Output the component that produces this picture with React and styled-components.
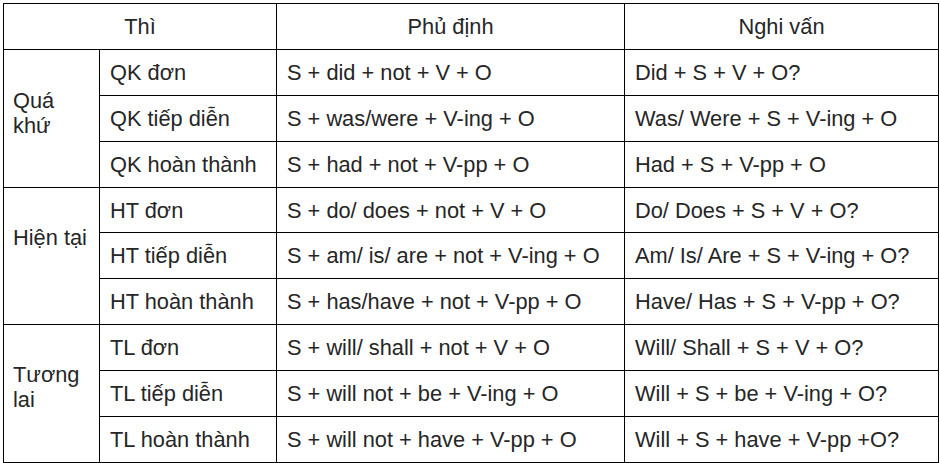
import React from 'react';
import styled, { createGlobalStyle } from 'styled-components';

const GlobalStyle = createGlobalStyle`
  html, body {
    margin: 0;
    padding: 0;
    background: #ffffff;
  }
  body {
    font-family: "Liberation Sans", Arial, sans-serif;
    color: #262626;
  }
`;

const Page = styled.div`
  padding: 3px;
`;

const Table = styled.table`
  border-collapse: collapse;
  table-layout: fixed;
  width: 935px;
  font-size: 21.8px;
  line-height: 25px;
`;

const Row = styled.tr`
  height: 45.9px;
`;

const HeadCell = styled.th`
  border: 1px solid #000000;
  font-weight: 400;
  text-align: center;
  vertical-align: middle;
  padding: 0 10px;
`;

const Cell = styled.td`
  border: 1px solid #000000;
  text-align: left;
  vertical-align: middle;
  padding: 0 10px;
  white-space: nowrap;
`;

// the period label spans its three rows and sits a little above centre
const GroupCell = styled.td`
  border: 1px solid #000000;
  text-align: left;
  vertical-align: middle;
  padding: 0 9px ${props => props.$lift}px;
`;

const groups = [
  {
    name: 'Quá khứ',
    lift: 10,
    rows: [
      ['QK đơn', 'S + did + not + V + O', 'Did + S + V + O?'],
      ['QK tiếp diễn', 'S + was/were + V-ing + O', 'Was/ Were + S + V-ing + O'],
      ['QK hoàn thành', 'S + had + not + V-pp + O', 'Had + S + V-pp + O'],
    ],
  },
  {
    name: 'Hiện tại',
    lift: 36,
    rows: [
      ['HT đơn', 'S + do/ does + not + V + O', 'Do/ Does + S + V + O?'],
      ['HT tiếp diễn', 'S + am/ is/ are + not + V-ing + O', 'Am/ Is/ Are + S + V-ing + O?'],
      ['HT hoàn thành', 'S + has/have + not + V-pp + O', 'Have/ Has + S + V-pp + O?'],
    ],
  },
  {
    name: 'Tương lai',
    lift: 13,
    rows: [
      ['TL đơn', 'S + will/ shall + not + V + O', 'Will/ Shall + S + V + O?'],
      ['TL tiếp diễn', 'S + will not + be + V-ing + O', 'Will + S + be + V-ing + O?'],
      ['TL hoàn thành', 'S + will not + have + V-pp + O', 'Will + S + have + V-pp +O?'],
    ],
  },
];

export default function App() {
  return (
    <Page>
      <GlobalStyle />
      <Table>
        <colgroup>
          <col style={{ width: 96 }} />
          <col style={{ width: 177 }} />
          <col style={{ width: 348 }} />
          <col style={{ width: 314 }} />
        </colgroup>
        <thead>
          <Row>
            <HeadCell colSpan={2}>Thì</HeadCell>
            <HeadCell>Phủ định</HeadCell>
            <HeadCell>Nghi vấn</HeadCell>
          </Row>
        </thead>
        <tbody>
          {groups.map(group =>
            group.rows.map((row, i) => (
              <Row key={group.name + i}>
                {i === 0 && (
                  <GroupCell $lift={group.lift} rowSpan={group.rows.length}>
                    {group.name}
                  </GroupCell>
                )}
                {row.map(text => (
                  <Cell key={text}>{text}</Cell>
                ))}
              </Row>
            ))
          )}
        </tbody>
      </Table>
    </Page>
  );
}
